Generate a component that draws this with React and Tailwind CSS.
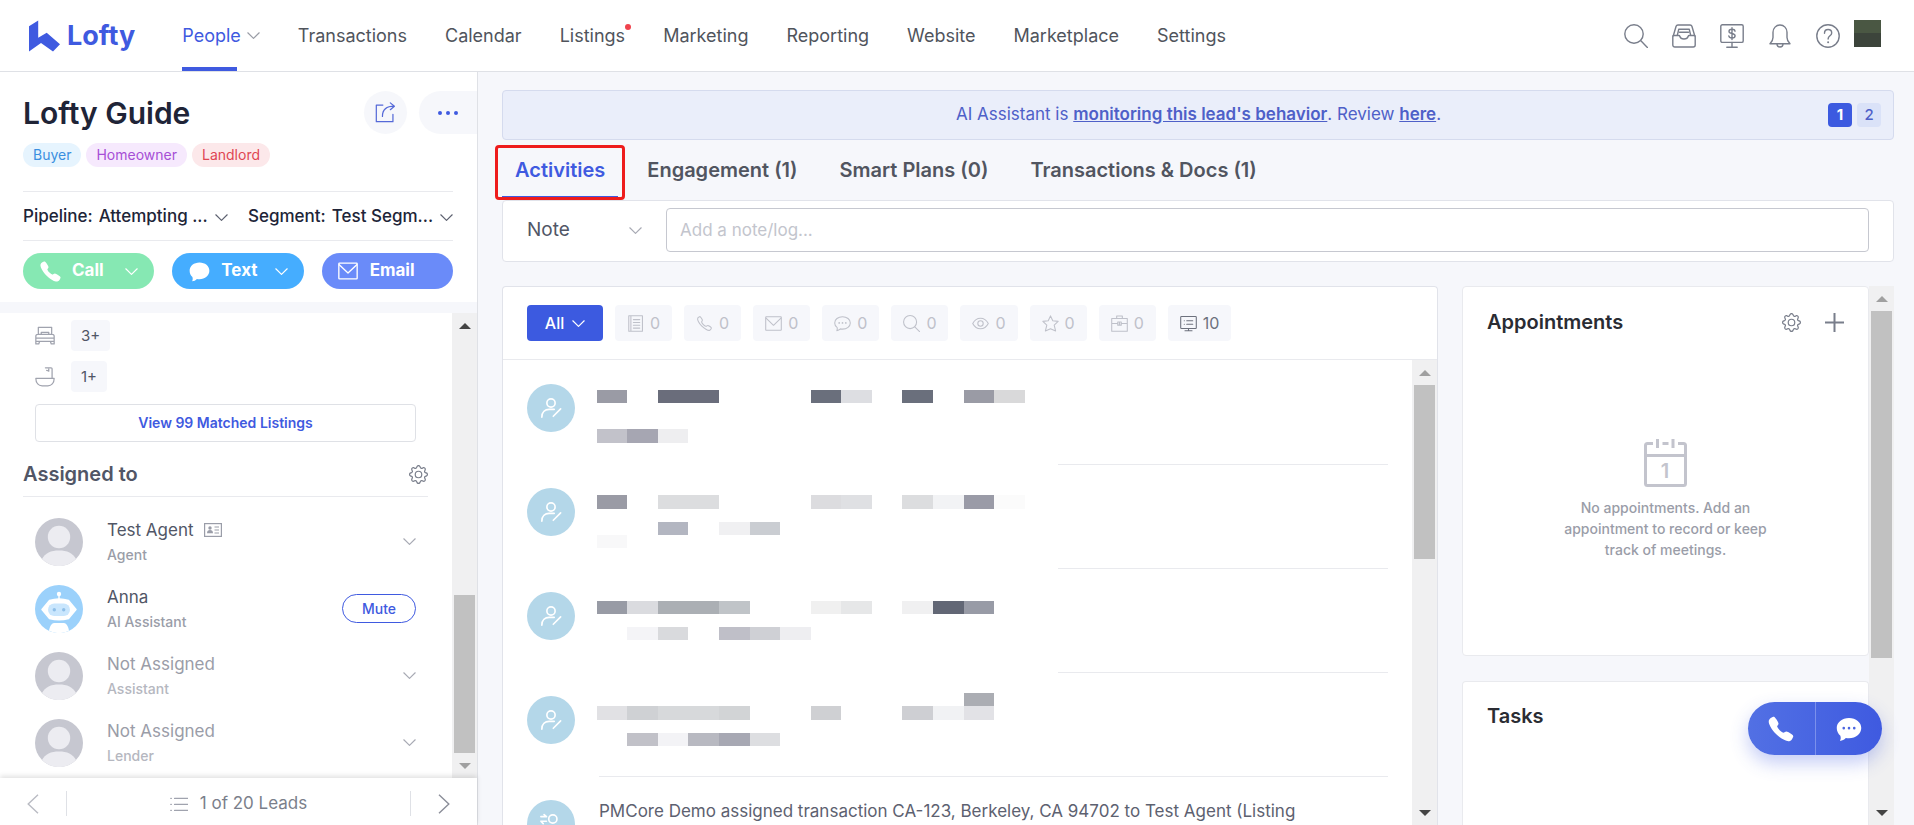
import { useState } from 'react';
import { BsGear } from 'react-icons/bs';
import { IoCall, IoCallOutline } from 'react-icons/io5';
import { clsx } from 'clsx';

const NAV_ITEMS = [
  { label: 'People', active: true },
  { label: 'Transactions' },
  { label: 'Calendar' },
  { label: 'Listings', dot: true },
  { label: 'Marketing' },
  { label: 'Reporting' },
  { label: 'Website' },
  { label: 'Marketplace' },
  { label: 'Settings' },
];

const TAGS = [
  { label: 'Buyer', className: 'bg-[#e6f4fe] text-[#3a8fe0]' },
  { label: 'Homeowner', className: 'bg-[#f6e9fd] text-[#a64fd6]' },
  { label: 'Landlord', className: 'bg-[#fce8ea] text-[#df4653]' },
];

const ASSIGNEES = [
  { name: 'Test Agent', role: 'Agent', card: true },
  { name: 'Anna', role: 'AI Assistant', bot: true },
  { name: 'Not Assigned', role: 'Assistant', empty: true },
  { name: 'Not Assigned', role: 'Lender', empty: true },
];

const TABS = ['Activities', 'Engagement (1)', 'Smart Plans (0)', 'Transactions & Docs (1)'];

// Redacted text blocks: [x, y, width, height, fill]
const REDACTED = [
  [
    [0, 6, 30, 13, '#9a9ba5'], [61, 6, 61, 13, '#6a6d7b'], [214, 6, 30, 13, '#6a6f7c'],
    [244, 6, 31, 13, '#dddee2'], [305, 6, 31, 13, '#6a6f7c'], [367, 6, 30, 13, '#9a9ba5'],
    [397, 6, 31, 13, '#d9d9da'], [0, 45, 30, 14, '#c2c2ca'], [30, 45, 31, 14, '#a6a6b2'],
    [61, 45, 30, 14, '#eeeef0'],
  ],
  [
    [0, 7, 30, 14, '#9a9ba5'], [61, 7, 61, 14, '#dcdddf'], [214, 7, 30, 14, '#dcdcdf'],
    [244, 7, 31, 14, '#dfe0e3'], [305, 7, 31, 14, '#dcdddf'], [336, 7, 31, 14, '#f2f3f5'],
    [367, 7, 30, 14, '#9a9ba7'], [397, 7, 31, 14, '#fbfbfb'], [61, 34, 30, 13, '#b3b6c1'],
    [122, 34, 31, 13, '#f0f0f2'], [153, 34, 30, 13, '#cacdd2'], [0, 47, 30, 13, '#f8f8f9'],
  ],
  [
    [0, 9, 30, 13, '#989ba5'], [30, 9, 31, 13, '#dadbdf'], [61, 9, 61, 13, '#abafb4'],
    [122, 9, 31, 13, '#c0c4c8'], [214, 9, 30, 13, '#f0f0f0'], [244, 9, 31, 13, '#e6e7e8'],
    [305, 9, 31, 13, '#f0f0f1'], [336, 9, 31, 13, '#626775'], [367, 9, 30, 13, '#989ba6'],
    [30, 35, 31, 13, '#f4f4f7'], [61, 35, 30, 13, '#d9dadd'], [122, 35, 31, 13, '#bfbfc8'],
    [153, 35, 30, 13, '#cfd0d5'], [183, 35, 31, 13, '#eeeef1'],
  ],
  [
    [0, 10, 30, 14, '#e1e1e4'], [30, 10, 31, 14, '#cfd1d4'], [61, 10, 61, 14, '#d7d9db'],
    [122, 10, 31, 14, '#d2d4d6'], [214, 10, 30, 14, '#cfd0d3'], [305, 10, 31, 14, '#cecfd3'],
    [336, 10, 31, 14, '#f1f2f4'], [367, 10, 30, 14, '#e2e2e6'], [367, -3, 30, 13, '#abadb3'],
    [30, 37, 31, 13, '#c1c1c8'], [61, 37, 30, 13, '#f3f3f6'], [91, 37, 31, 13, '#b8b9c1'],
    [122, 37, 31, 13, '#a7a8b3'], [153, 37, 30, 13, '#dddee1'],
  ],
];

function Icon({ size = 18, box = 24, stroke = 1.5, className, children }) {
  return (
    <svg
      width={size}
      height={size}
      viewBox={`0 0 ${box} ${box}`}
      fill="none"
      stroke="currentColor"
      strokeWidth={stroke}
      strokeLinecap="round"
      strokeLinejoin="round"
      className={clsx('shrink-0', className)}
      aria-hidden="true"
    >
      {children}
    </svg>
  );
}

function Chevron({ className }) {
  return (
    <svg width="13" height="13" viewBox="0 0 13 13" fill="none" stroke="currentColor" strokeWidth="1.2" strokeLinecap="round" strokeLinejoin="round" className={clsx('shrink-0', className)} aria-hidden="true">
      <path d="M0.8 3.8l5.7 5.6 5.7-5.6" />
    </svg>
  );
}

const SearchIcon = (props) => (
  <Icon {...props}>
    <circle cx="10" cy="10" r="9.2" />
    <path d="M16.6 16.6l6.8 6.8" />
  </Icon>
);

const InboxIcon = (props) => (
  <Icon {...props}>
    <path d="M.8 12.3V21a2 2 0 0 0 2 2h18.4a2 2 0 0 0 2-2v-8.7a.8.8 0 0 0-.8-.8h-5.3c-.5 0-.8.4-1 1-.4 1.6-1.7 2.500-4.100 2.500s-3.700-.9-4.100-2.500c-.2-.6-.5-1-1-1H1.600a.8.8 0 0 0-.8.8z" />
    <path d="M1.300 11.700L4.100 2.300C4.400 1.400 5 1 5.900 1h12.200c.9 0 1.500.4 1.800 1.300l2.800 9.400" />
    <path d="M5.300 11.300l1.400-6h10.600l1.400 6M7.500 8.300h9" />
  </Icon>
);

const BoardIcon = (props) => (
  <Icon {...props}>
    <rect x=".8" y=".8" width="22.4" height="17.6" rx="1.5" />
    <path d="M12 18.400v4.800M6.800 23.200h10.400" />
    <path d="M15 7.200c-.3-1.300-1.500-1.900-3-1.900s-3 .7-3 2.100c0 3 6.100 1.300 6.100 4.400 0 1.500-1.400 2.200-3.100 2.200s-2.900-.8-3.200-2.100M12 3.800v11.700" />
  </Icon>
);

const BellIcon = (props) => (
  <Icon {...props}>
    <path d="M2 19.800h20c-1.800-1.800-3-3.400-3-6.300V8.300C19 4.200 16 1 12 1S5 4.200 5 8.300v5.200c0 2.900-1.200 4.500-3 6.300z" />
    <path d="M9 20a3 3 0 0 0 6 0" />
  </Icon>
);

const HelpIcon = (props) => (
  <Icon {...props}>
    <circle cx="12" cy="12" r="11.2" />
    <path d="M8.500 9.200c0-2.200 1.500-3.700 3.600-3.700s3.600 1.400 3.600 3.400c0 2.900-3.600 3-3.600 6.100" />
    <path d="M12.100 18.200v.1" strokeWidth="2" />
  </Icon>
);

const MailIcon = (props) => (
  <Icon {...props}>
    <rect x="1" y="2.5" width="22" height="19" rx=".8" />
    <path d="M1.500 4.500L12 14.500l10.500-10" />
  </Icon>
);

const NotesIcon = (props) => (
  <Icon {...props}>
    <path d="M5.500 1h16.300v22H5.500zM5.500 1H2.500v22h3" />
    <path d="M9 6.500h9M9 10.500h9M9 14.500h9M9 18.500h9" />
  </Icon>
);

const ChatIcon = (props) => (
  <Icon {...props}>
    <path d="M12 2.500c6.200 0 11 3.700 11 8.700s-4.800 8.700-11 8.700c-1 0-2-.1-2.900-.3-1.500 1.400-3 2.200-5.100 2.500.7-1.400.9-2.600.5-4.300C2.300 16.300 1 13.900 1 11.200c0-5 4.800-8.700 11-8.700z" />
    <path d="M7.300 11.200v.1M12 11.200v.1M16.700 11.200v.1" strokeWidth="2.4" />
  </Icon>
);

const EyeIcon = (props) => (
  <Icon {...props}>
    <path d="M1 12c2.600-5 6.300-7.500 11-7.500S20.400 7 23 12c-2.600 5-6.300 7.500-11 7.500S3.600 17 1 12z" />
    <circle cx="12" cy="12" r="3.8" />
  </Icon>
);

const StarIcon = (props) => (
  <Icon {...props}>
    <path d="M12 1.200l3.200 7 7.600.8-5.600 5.200 2 8.300-7.200-3-7.200 3 2-8.300L1.200 9l7.600-.8z" />
  </Icon>
);

const BriefcaseIcon = (props) => (
  <Icon {...props}>
    <path d="M1 5h22v18H1zM8 5V1.500h8V5M1 12h8.500M14.500 12H23" />
    <path d="M9.500 10h5v4.300h-5zM12 10v4" />
  </Icon>
);

const MonitorIcon = (props) => (
  <Icon {...props}>
    <rect x="1" y="2" width="22" height="17" rx="1" />
    <path d="M6 8h.1M9.500 8H18M6 13h.1M9.500 13H18M12 19v3M7 22.300h10" />
  </Icon>
);

const FILTERS = [
  { label: 'Notes', Glyph: NotesIcon, count: 0 },
  { label: 'Calls', Glyph: ({ size }) => <IoCallOutline size={size} />, count: 0 },
  { label: 'Emails', Glyph: MailIcon, count: 0 },
  { label: 'Texts', Glyph: ChatIcon, count: 0 },
  { label: 'Searches', Glyph: SearchIcon, count: 0 },
  { label: 'Views', Glyph: EyeIcon, count: 0 },
  { label: 'Favorites', Glyph: StarIcon, count: 0 },
  { label: 'Transactions', Glyph: BriefcaseIcon, count: 0 },
  { label: 'System', Glyph: MonitorIcon, count: 10 },
];

/** Classic scrollbar: arrows on both ends, thumb placed by share of the track. */
function ScrollBar({ top, height, upDark, downDark }) {
  return (
    <div className="flex w-[25px] shrink-0 flex-col bg-[#f0f0f1]">
      <div className="flex h-[25px] items-center justify-center">
        <svg width="12" height="6" viewBox="0 0 12 6" className={upDark ? 'text-[#444]' : 'text-[#a0a0a0]'} aria-hidden="true"><path d="M6 0l6 6H0z" fill="currentColor" /></svg>
      </div>
      <div className="relative flex-1">
        <div className="absolute inset-x-[2px] bg-[#c1c1c1]" style={{ top: `${top}%`, height: `${height}%` }} />
      </div>
      <div className="flex h-[25px] items-center justify-center">
        <svg width="12" height="6" viewBox="0 0 12 6" className={downDark ? 'text-[#444]' : 'text-[#a0a0a0]'} aria-hidden="true"><path d="M6 6l6-6H0z" fill="currentColor" /></svg>
      </div>
    </div>
  );
}

function Header() {
  return (
    <header className="flex h-[72px] shrink-0 items-center border-b border-[#dfe1e6] bg-white pr-[33px] pl-[29px]">
      <a href="#home" className="flex items-center gap-[7px] text-[#3f5ae0]">
        <svg width="31" height="32" viewBox="0 0 31 32" fill="currentColor" aria-hidden="true">
          <path d="M0 6.200L9.200.4v17.400l8.500-5L31 24.300l-7 7.200-12-8.600L0 31.500z" />
        </svg>
        <span className="text-[27px] leading-8 font-bold">Lofty</span>
      </a>
      <nav className="ml-[47px] flex h-full gap-[38px] text-lg text-[#50545c]">
        {NAV_ITEMS.map((item) => (
          <a key={item.label} href={`#${item.label}`} className={clsx('relative flex items-center', item.active && 'gap-1.5 text-[#3f5ae0]')}>
            {item.label}
            {item.active && <Chevron className="text-[#9a9da6]" />}
            {item.active && <span className="absolute bottom-0 left-0 h-1 w-[55px] bg-[#3f5ae0]" />}
            {item.dot && <span className="absolute top-6 -right-1.5 size-1.5 rounded-full bg-[#f0434d]" />}
          </a>
        ))}
      </nav>
      <div className="ml-auto flex items-center gap-6 text-[#797e8b]">
        <button type="button" title="Search"><SearchIcon size={24} stroke={1.4} /></button>
        <button type="button" title="Inbox"><InboxIcon size={24} stroke={1.4} /></button>
        <button type="button" title="Billing"><BoardIcon size={24} stroke={1.4} /></button>
        <button type="button" title="Notifications"><BellIcon size={24} stroke={1.4} /></button>
        <button type="button" title="Help"><HelpIcon size={24} stroke={1.4} /></button>
      </div>
      <button type="button" title="Account" className="mb-1 ml-3.5 flex size-[27px] flex-col">
        <span className="h-[13px] w-full bg-[#4a5743]" />
        <span className="w-full flex-1 bg-[#3c443b]" />
      </button>
    </header>
  );
}

function LeadSelect({ id, label, value }) {
  return (
    <div className="relative flex min-w-0 flex-1 items-center gap-1.5">
      <label htmlFor={id}>{label}</label>
      <select id={id} className="min-w-0 flex-1 appearance-none bg-transparent pr-4 outline-none">
        <option>{value}</option>
      </select>
      <Chevron className="pointer-events-none absolute right-0 text-[#5d6170]" />
    </div>
  );
}

function Avatar({ bot }) {
  if (bot) {
    return (
      <svg width="48" height="48" viewBox="0 0 48 48" className="shrink-0" aria-hidden="true">
        <circle cx="24" cy="24" r="24" fill="#9bd1fb" />
        <circle cx="24" cy="9" r="2.2" fill="#fff" />
        <path d="M23.300 9h1.400v6h-1.400z" fill="#fff" />
        <path d="M14.500 15.500Q24 12.500 33.500 15.500L41 24.500l-7.500 9Q24 36 14.500 33.500L7 24.500z" fill="#fff" stroke="#fff" strokeWidth="1.5" strokeLinejoin="round" />
        <rect x="13" y="18.5" width="22" height="12.5" rx="6.2" fill="#c9e6fd" />
        <circle cx="19.3" cy="24.7" r="1.7" fill="#8fbfe8" />
        <circle cx="28.7" cy="24.7" r="1.7" fill="#8fbfe8" />
        <path d="M14 45.800c.8-5 3-7.800 5-7.800h10c2 0 4.200 2.800 5 7.800A24 24 0 0 1 14 45.800z" fill="#fff" />
      </svg>
    );
  }
  return (
    <svg width="48" height="48" viewBox="0 0 48 48" className="shrink-0" aria-hidden="true">
      <circle cx="24" cy="24" r="24" fill="#c6c7d0" />
      <circle cx="24" cy="19" r="11.2" fill="#ececf1" />
      <path d="M7 41c3-6 9-8.500 17-8.500S38 35 41 41a24 24 0 0 1-34 0z" fill="#ececf1" />
    </svg>
  );
}

function Sidebar() {
  return (
    <aside className="flex w-[478px] shrink-0 flex-col border-r border-[#dfe1e6] bg-white">
      <div className="pl-[23px]">
        <div className="flex items-center pt-[19px]">
          <h1 className="text-[30px] leading-9 font-semibold text-[#202437]">Lofty Guide</h1>
          <button type="button" title="Share" className="ml-auto flex size-[43px] items-center justify-center rounded-full bg-[#f6f7fb] text-[#5569d8]">
            <Icon size={21} stroke={1.4}>
              <path d="M9 3.500H1.500v19h19V14" />
              <path d="M8.500 16.500C8.500 9 13 4.800 22 4.800M17.500 1l4.700 3.800-4.700 4" />
            </Icon>
          </button>
          <button type="button" title="More" className="ml-3 flex h-[43px] w-[58px] items-center justify-center gap-1 rounded-l-full bg-[#f6f7fb]">
            <span className="size-1 rounded-full bg-[#3f5ae0]" />
            <span className="size-1 rounded-full bg-[#3f5ae0]" />
            <span className="size-1 rounded-full bg-[#3f5ae0]" />
          </button>
        </div>
        <div className="mt-[9px] flex gap-[5px]">
          {TAGS.map((tag) => (
            <span key={tag.label} className={clsx('rounded-full px-2.5 text-sm leading-6', tag.className)}>{tag.label}</span>
          ))}
        </div>
        <div className="mt-6 mr-6 flex h-[50px] items-center gap-5 border-y border-[#e9eaee] pt-0.5 text-[17px] font-medium text-[#202437]">
          <LeadSelect id="pipeline" label="Pipeline:" value="Attempting ..." />
          <LeadSelect id="segment" label="Segment:" value="Test Segm..." />
        </div>
        <div className="mt-3 mr-6 mb-[13px] grid grid-cols-3 gap-[18px] text-[17px] font-bold text-white">
          <button type="button" className="flex h-9 items-center gap-2.5 rounded-full bg-[#86e8b3] px-4">
            <IoCall size={23} />Call<Chevron className="ml-auto" />
          </button>
          <button type="button" className="flex h-9 items-center gap-2.5 rounded-full bg-[#45adff] px-4">
            <Icon size={23}>
              <path d="M12 2.500c5.800 0 10.300 3.700 10.300 8.700S17.800 20 12 20c-1 0-1.900-.1-2.700-.3-1.600 1.500-3 2.200-5 2.500.7-1.500.8-2.700.3-4.400C2.700 16.200 1.700 13.900 1.700 11.200c0-5 4.500-8.700 10.300-8.700z" fill="currentColor" stroke="none" />
            </Icon>
            Text<Chevron className="ml-auto" />
          </button>
          <button type="button" className="flex h-9 items-center gap-3 rounded-full bg-[#6a8bf9] px-4">
            <MailIcon size={20} stroke={1.6} />Email
          </button>
        </div>
      </div>
      <div className="h-[11px] shrink-0 bg-[#f6f7fb]" />

      <div className="flex min-h-0 flex-1">
        <div className="min-w-0 flex-1 overflow-hidden pr-6 pl-[23px]">
          <div className="flex flex-col gap-2.5 pt-[7px] pr-3 pl-3 text-[15px] text-[#515666]">
            <div className="flex items-center gap-4">
              <Icon size={20} className="text-[#a0a3ae]">
                <path d="M4 10V1.500h16V10M7.500 10V7.500h9V10M1 18.500v-6.200c0-1.400 1-2.300 2.300-2.300h17.400c1.300 0 2.300.9 2.300 2.300v6.200M1 14.500h22M1 18.500h22v3h-3.500l-1-2.800M1 18.500v3h3.500l1-2.800" />
              </Icon>
              <span className="rounded bg-[#f6f7fb] px-2.5 leading-[31px]">3+</span>
            </div>
            <div className="flex items-center gap-4">
              <Icon size={20} className="text-[#a0a3ae]">
                <path d="M1 13.500h22c0 6-3.500 9-7.500 9h-7C4.500 22.500 1 19.500 1 13.500zM20.500 13.500V2.200C20.500 1.500 20 1 19.300 1H12.500M14 4l1.500.5M16.500 2.500V5" />
              </Icon>
              <span className="rounded bg-[#f6f7fb] px-2.5 leading-[31px]">1+</span>
            </div>
            <button type="button" className="mt-0.5 h-[38px] rounded border border-[#dfe1e6] text-sm font-semibold text-[#3f5ae0]">
              View 99 Matched Listings
            </button>
          </div>
          <div className="flex h-[55px] items-center justify-between border-b border-[#e9eaee] pt-2.5">
            <h2 className="text-xl font-semibold text-[#515666]">Assigned to</h2>
            <button type="button" title="Settings" className="text-[#797e8b]"><BsGear size={19} /></button>
          </div>
          <ul className="pt-[11px] pr-3 pl-3">
            {ASSIGNEES.map((person) => (
              <li key={person.role} className="flex h-[67px] items-center">
                <Avatar bot={person.bot} />
                <div className="ml-6">
                  <p className={clsx('flex items-center gap-2.5 text-[17px] leading-[26px]', person.empty ? 'text-[#9a9da8]' : 'text-[#515666]')}>
                    {person.name}
                    {person.card && (
                      <svg width="18" height="14" viewBox="0 0 18 14" fill="none" stroke="#9a9da8" strokeWidth="1.2" aria-hidden="true">
                        <rect x=".6" y=".6" width="16.8" height="12.8" />
                        <circle cx="6" cy="5" r="1.7" fill="#9a9da8" stroke="none" />
                        <path d="M3 10.200c0-2.200 1.200-3.200 3-3.200s3 1 3 3.200z" fill="#9a9da8" stroke="none" />
                        <path d="M10.500 4H15M10.500 7H15M10.500 10H15" />
                      </svg>
                    )}
                  </p>
                  <p className={clsx('text-sm leading-6 font-medium', person.empty ? 'text-[#b5b7c0]' : 'text-[#9a9da8]')}>{person.role}</p>
                </div>
                {person.bot ? (
                  <button type="button" className="ml-auto h-[29px] w-[74px] rounded-full border border-[#3f5ae0] text-sm font-medium text-[#3f5ae0]">Mute</button>
                ) : (
                  <button type="button" title="Change" className="ml-auto text-[#a8aab4]"><Chevron /></button>
                )}
              </li>
            ))}
          </ul>
        </div>
        <ScrollBar top={62} height={38} upDark />
      </div>

      <div className="z-10 flex h-[47px] shrink-0 items-center bg-white px-[27px] pt-1 shadow-[0_-2px_5px_rgba(0,0,0,0.12)]">
        <button type="button" title="Previous lead" className="text-[#b9bbc3]">
          <svg width="12" height="20" viewBox="0 0 12 20" fill="none" stroke="currentColor" strokeWidth="1.4" aria-hidden="true"><path d="M11 .8L1.200 10l9.800 9.200" /></svg>
        </button>
        <div className="mx-[27px] flex h-[25px] flex-1 items-center justify-center gap-3 border-x border-[#dfe1e6] text-[17px] text-[#7b7f8b]">
          <Icon size={18} className="text-[#a0a3ae]">
            <path d="M6 4.500h18M6 12.500h18M6 20.500h18M1 4.500h.8M1 12.500h.8M1 20.500h.8" />
          </Icon>
          1 of 20 Leads
        </div>
        <button type="button" title="Next lead" className="text-[#8b8e99]">
          <svg width="12" height="20" viewBox="0 0 12 20" fill="none" stroke="currentColor" strokeWidth="1.4" aria-hidden="true"><path d="M1 .8L10.800 10 1 19.200" /></svg>
        </button>
      </div>
    </aside>
  );
}

function ActivityFeed() {
  return (
    <section className="flex min-w-0 flex-1 flex-col rounded-t border border-b-0 border-[#e1e3ea] bg-white">
      <div className="flex items-center gap-3 border-b border-[#e9eaee] px-6 py-[18px]">
        <button type="button" className="flex h-9 w-[76px] items-center justify-center gap-2 rounded bg-[#3c5ae0] text-base font-medium text-white">
          All<Chevron />
        </button>
        {FILTERS.map(({ label, Glyph, count }) => (
          <button key={label} type="button" title={label} className={clsx('flex h-9 items-center gap-1.5 rounded bg-[#f6f7fb] px-3 text-base', count ? 'text-[#6d717d]' : 'text-[#bfc1ca]')}>
            <Glyph size={17} />{count}
          </button>
        ))}
      </div>
      <div className="flex min-h-0 flex-1">
        <ul className="min-w-0 flex-1 overflow-hidden">
          {REDACTED.map((blocks, i) => (
            <li key={i} className="flex h-[104px] gap-[22px] px-6 pt-6">
              <span className="flex size-12 shrink-0 items-center justify-center rounded-full bg-[#b4d7e9] text-white">
                <Icon size={22} stroke={1.8}>
                  <circle cx="12" cy="6.5" r="4.5" />
                  <path d="M2 22c0-5.500 3.500-8.500 8-8.500h5.500M22.500 13l-8 8" />
                </Icon>
              </span>
              <div className="flex min-w-0 flex-1 flex-col">
                <svg width="428" height="72" viewBox="0 0 428 72" className="overflow-visible" shapeRendering="crispEdges" aria-hidden="true">
                  {blocks.map(([x, y, w, h, fill]) => (
                    <rect key={`${x}-${y}`} x={x} y={y} width={w} height={h} fill={fill} />
                  ))}
                </svg>
                <hr className={clsx('mt-auto -mb-px border-[#e9eaee]', i === 3 ? 'ml-0.5' : 'ml-auto w-[330px]')} />
              </div>
            </li>
          ))}
          <li className="flex gap-6 px-6 pt-6">
            <span className="flex size-12 shrink-0 items-center justify-center rounded-full bg-[#b4d7e9] text-white">
              <Icon size={22} stroke={1.8}>
                <circle cx="14" cy="6.5" r="4.5" />
                <path d="M1 4h6M1 9h6M4.500 1.800L7 4M1 9l2.500 2.500M4.500 22c0-5.500 4-8 9.500-8s9.500 2.500 9.500 8" />
              </Icon>
            </span>
            <p className="text-[17px] leading-[22px] whitespace-nowrap text-[#5d6170]">
              PMCore Demo assigned transaction CA-123, Berkeley, CA 94702 to Test Agent (Listing
            </p>
          </li>
        </ul>
        <ScrollBar top={0} height={42} downDark />
      </div>
    </section>
  );
}

function RightRail() {
  return (
    <div className="flex w-[432px] shrink-0">
      <div className="flex min-w-0 flex-1 flex-col gap-[25px] overflow-hidden">
        <section className="h-[370px] shrink-0 rounded border border-[#e9eaee] bg-white px-6">
          <div className="flex h-[70px] items-center text-[#797e8b]">
            <h2 className="mr-auto text-xl font-semibold text-[#2a2c33]">Appointments</h2>
            <button type="button" title="Settings"><BsGear size={19} /></button>
            <button type="button" title="Add appointment" className="ml-6">
              <svg width="19" height="19" viewBox="0 0 19 19" stroke="currentColor" strokeWidth="2" aria-hidden="true"><path d="M9.500 0v19M0 9.500h19" /></svg>
            </button>
          </div>
          <div className="mt-[82px] flex flex-col items-center">
            <svg width="43" height="48" viewBox="0 0 43 48" fill="none" stroke="#c3c4cd" strokeWidth="3" aria-hidden="true">
              <path d="M9 4.500H3.500a2 2 0 0 0-2 2V44.500a2 2 0 0 0 2 2h36a2 2 0 0 0 2-2v-38a2 2 0 0 0-2-2H34M18.500 4.500h6M13.500 0v9M29 0v9M1.500 16.500h40" />
              <text x="21" y="38.5" textAnchor="middle" fontSize="20" fontWeight="600" fill="#c3c4cd" stroke="none">1</text>
            </svg>
            <p className="mt-2.5 w-[220px] text-center text-sm leading-[21px] font-medium text-[#9a9da8]">
              No appointments. Add an appointment to record or keep track of meetings.
            </p>
          </div>
        </section>
        <section className="flex-1 rounded-t border border-b-0 border-[#e9eaee] bg-white px-6">
          <h2 className="text-xl leading-[68px] font-semibold text-[#2a2c33]">Tasks</h2>
        </section>
      </div>
      <ScrollBar top={0} height={71} downDark />
    </div>
  );
}

export default function App() {
  const [tab, setTab] = useState(TABS[0]);
  const [note, setNote] = useState('');

  return (
    <div className="flex h-screen flex-col overflow-hidden bg-[#f6f7fb] font-['Inter',sans-serif]">
      <Header />
      <div className="flex min-h-0 flex-1">
        <Sidebar />
        <main className="flex min-w-0 flex-1 flex-col pt-[18px] pr-5 pl-6">
          {/* AI banner */}
          <div className="flex h-[50px] shrink-0 items-center rounded border border-[#d5dbee] bg-[#eaeefa] pr-3 text-[17px] text-[#4e60c8]">
            <p className="flex-1 pl-[66px] text-center">
              AI Assistant is <a href="#behavior" className="font-semibold underline">monitoring this lead's behavior</a>. Review <a href="#review" className="font-semibold underline">here</a>.
            </p>
            <button type="button" className="size-6 rounded bg-[#3c5ae0] text-[15px] font-bold text-white">1</button>
            <button type="button" className="ml-[5px] size-6 rounded bg-[#dae2f8] text-[15px] font-medium text-[#4e60c8]">2</button>
          </div>

          {/* Tabs */}
          <div className="flex h-[60px] shrink-0 gap-4">
            {TABS.map((name) => (
              <button
                key={name}
                type="button"
                onClick={() => setTab(name)}
                className={clsx('relative border-b-4 px-[13px] pt-1 text-xl font-semibold', name === tab ? 'border-[#3f5ae0] text-[#3f5ae0]' : 'border-transparent text-[#515560]')}
              >
                {name}
                {name === tab && <span className="absolute -inset-x-[7px] top-[5px] -bottom-1 rounded border-[3px] border-[#ee1c1c]" />}
              </button>
            ))}
          </div>

          {/* Note */}
          <div className="flex h-[62px] shrink-0 items-center rounded border border-[#e1e3ea] bg-white px-6 pb-0.5">
            <div className="relative flex w-[115px] items-center">
              <select aria-label="Log type" className="w-full appearance-none bg-transparent text-[19px] text-[#515666] outline-none">
                <option>Note</option>
              </select>
              <Chevron className="pointer-events-none absolute right-0 text-[#a8aab4]" />
            </div>
            <input
              type="text"
              value={note}
              onChange={(e) => setNote(e.target.value)}
              aria-label="Note"
              placeholder="Add a note/log..."
              className="ml-6 h-11 min-w-0 flex-1 rounded border border-[#c6c8d0] px-[13px] text-[17px] text-[#515666] outline-none placeholder:text-[#c3c5cd]"
            />
          </div>

          <div className="mt-6 flex min-h-0 flex-1 gap-6">
            <ActivityFeed />
            <RightRail />
          </div>
        </main>
      </div>

      {/* Floating dialer */}
      <div className="fixed right-8 bottom-[70px] z-20 flex h-[53px] w-[134px] divide-x divide-[#7b90ec] rounded-full bg-linear-to-r from-[#5270e4] to-[#3f5ae0] text-white shadow-[0_8px_18px_rgba(63,90,224,0.3)]">
        <button type="button" title="Dial" className="flex flex-1 items-center justify-center"><IoCall size={28} /></button>
        <button type="button" title="Message" className="flex flex-1 items-center justify-center">
          <Icon size={28}>
            <path d="M12 2.500c6 0 10.500 3.700 10.500 8.700S18 20 12 20c-1 0-1.900-.1-2.700-.3-1.600 1.500-3 2.200-5 2.500.7-1.500.8-2.700.3-4.400-1.900-1.600-3.100-3.900-3.100-6.600 0-5 4.500-8.700 10.500-8.700z" fill="currentColor" stroke="none" />
            <path d="M7.500 11.200v.1M12 11.200v.1M16.500 11.200v.1" stroke="#4a64e0" strokeWidth="2.2" />
          </Icon>
        </button>
      </div>
    </div>
  );
}
